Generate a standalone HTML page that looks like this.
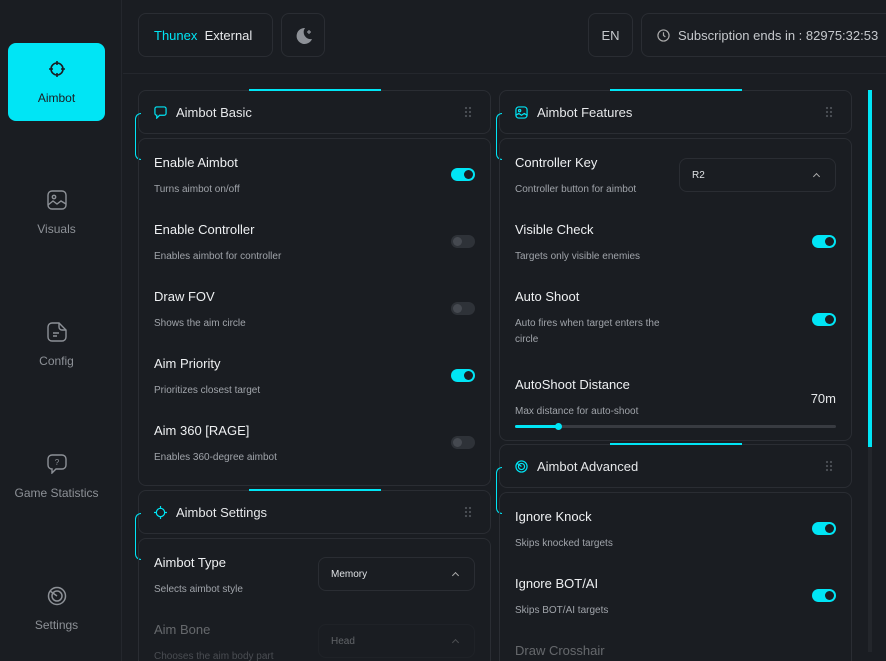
<!DOCTYPE html>
<html><head><meta charset="utf-8"><style>
*{margin:0;padding:0;box-sizing:border-box}
html{width:886px;height:661px;overflow:hidden}
body{width:886px;height:661px;background:#1a1d22;font-family:"Liberation Sans",sans-serif;color:#e6e8ea;position:relative;overflow:hidden}
.abs{position:absolute}
.side{left:0;top:0;width:122px;height:661px;border-right:1px solid #24272d}
.nav{position:absolute;left:8px;width:97px;text-align:center;font-size:12px;color:#8d9197}
.nav svg{display:block;margin:0 auto 12px}
.act{background:#00e5f5;border-radius:8px;color:#1a1d22;height:78px;top:43px;padding-top:16px}
.box{border:1px solid #2a2d33;border-radius:8px;position:absolute}
.hdr{height:44px;font-size:13px;display:flex;align-items:center;padding-left:15px}
.hdr svg{margin-right:9px}
.grip{position:absolute;right:18px;top:15px;width:8px;height:12px;background-image:radial-gradient(circle,#4a4e55 1px,transparent 1.3px);background-size:4px 4px}
.topline{position:absolute;height:2px;background:#00e5f5;width:132px}
.brk{position:absolute;width:6px;height:47px;border:1px solid #00e5f5;border-right:none;border-radius:6px 0 0 6px}
.row{position:absolute;left:15px;right:15px}
.t{font-size:13px;color:#eef0f2}
.d{font-size:10px;color:#a0a4aa;margin-top:12px;line-height:16px}
.tg{position:absolute;right:0;width:24px;height:13px;border-radius:7px;background:#00e5f5}
.tg::after{content:"";position:absolute;right:2px;top:2px;width:9px;height:9px;border-radius:50%;background:#1a1d22}
.tg.off{background:#2e3238}
.tg.off::after{background:#454950;left:2px;right:auto}
.sel{position:absolute;right:0;width:157px;height:34px;border:1px solid #2a2d33;border-radius:8px;font-size:10px;padding:11px 0 0 12px;color:#dfe2e5}
.sel::after{content:"";position:absolute;right:16px;top:15px;width:4px;height:4px;border-left:1px solid #aaa;border-top:1px solid #aaa;transform:rotate(45deg)}
</style></head><body>
<div class="abs side"></div>
<div class="nav act"><svg width="20" height="20" viewBox="0 0 20 20" fill="none" stroke="#1a1d22" stroke-width="1.6"><circle cx="10" cy="10" r="6"/><path d="M10 2v4M10 14v4M2 10h4M14 10h4"/></svg>Aimbot</div>
<div class="nav" style="top:190px"><svg width="20" height="20" viewBox="0 0 20 20" fill="none" stroke="#8d9197" stroke-width="1.4"><rect x="1" y="1" width="18" height="18" rx="4"/><circle cx="7" cy="7" r="1.7"/><path d="M1 15l5-4 4 3 4-3 5 3"/></svg>Visuals</div>
<div class="nav" style="top:322px"><svg width="20" height="20" viewBox="0 0 20 20" fill="none" stroke="#8d9197" stroke-width="1.4"><path d="M5 1h7l7 7v7a4 4 0 0 1-4 4H5a4 4 0 0 1-4-4V5a4 4 0 0 1 4-4z"/><path d="M12 1v4a3 3 0 0 0 3 3h4M6 11h6M6 14h4"/></svg>Config</div>
<div class="nav" style="top:454px"><svg width="20" height="20" viewBox="0 0 20 20" fill="none" stroke="#8d9197" stroke-width="1.4"><path d="M5 1h10a4 4 0 0 1 4 4v6a4 4 0 0 1-4 4H9l-4 4v-4a4 4 0 0 1-4-4V5a4 4 0 0 1 4-4z"/><text x="10" y="11" font-size="8" fill="#8d9197" stroke="none" text-anchor="middle" font-family="Liberation Sans">?</text></svg>Game Statistics</div>
<div class="nav" style="top:586px"><svg width="20" height="20" viewBox="0 0 20 20" fill="none" stroke="#8d9197" stroke-width="1.5"><circle cx="10" cy="10" r="8.5"/><circle cx="10" cy="10" r="5"/><path d="M3 5l7 5"/></svg>Settings</div>

<div class="abs" style="left:123px;top:73px;width:763px;height:1px;background:#24272d"></div>
<div class="box" style="left:138px;top:13px;width:135px;height:44px;font-size:13px;padding:14px 0 0 15px"><span style="color:#00e5f5">Thunex</span>&nbsp;&nbsp;External</div>
<div class="box" style="left:281px;top:13px;width:44px;height:44px"><svg class="abs" style="left:12px;top:12px" width="20" height="20" viewBox="0 0 20 20"><path d="M11 2a8 8 0 1 0 7 11A7 7 0 0 1 11 2z" fill="#8d9197"/><path d="M15 4v4M13 6h4" stroke="#8d9197" stroke-width="1.2"/></svg></div>
<div class="box" style="left:588px;top:13px;width:45px;height:44px;font-size:13px;text-align:center;padding-top:14px;color:#c5c8cc">EN</div>
<div class="box" style="left:641px;top:13px;width:260px;height:44px;font-size:13px;padding:14px 0 0 36px;color:#c5c8cc;white-space:nowrap"><svg class="abs" style="left:15px;top:15px" width="13" height="13" viewBox="0 0 14 14" fill="none" stroke="#aaa" stroke-width="1.3"><circle cx="7" cy="7" r="6"/><path d="M7 3.5V7l2 1.5"/></svg>Subscription ends in : 82975:32:53</div>

<div class="abs" style="left:868px;top:90px;width:4px;height:562px;background:#23262b"></div>
<div class="abs" style="left:868px;top:90px;width:4px;height:357px;background:#00e5f5"></div>

<div class="box hdr" style="left:138px;top:90px;width:353px">
<svg width="13" height="13" viewBox="0 0 14 14" fill="none" stroke="#00e5f5" stroke-width="1.3"><path d="M3 1h8a2 2 0 0 1 2 2v5a2 2 0 0 1-2 2H6l-3 3v-3a2 2 0 0 1-2-2V3a2 2 0 0 1 2-2z"/></svg>Aimbot Basic<div class="grip"></div></div>
<div class="topline" style="left:249px;top:89px"></div>
<div class="brk" style="left:135px;top:113px"></div>
<div class="box" style="left:138px;top:138px;width:353px;height:348px">
<div class="row" style="top:16px"><div class="t">Enable Aimbot</div><div class="d">Turns aimbot on/off</div><div class="tg" style="top:13px"></div></div>
<div class="row" style="top:83px"><div class="t">Enable Controller</div><div class="d">Enables aimbot for controller</div><div class="tg off" style="top:13px"></div></div>
<div class="row" style="top:150px"><div class="t">Draw FOV</div><div class="d">Shows the aim circle</div><div class="tg off" style="top:13px"></div></div>
<div class="row" style="top:217px"><div class="t">Aim Priority</div><div class="d">Prioritizes closest target</div><div class="tg" style="top:13px"></div></div>
<div class="row" style="top:284px"><div class="t">Aim 360 [RAGE]</div><div class="d">Enables 360-degree aimbot</div><div class="tg off" style="top:13px"></div></div>
</div>

<div class="box hdr" style="left:138px;top:490px;width:353px">
<svg width="13" height="13" viewBox="0 0 14 14" fill="none" stroke="#00e5f5" stroke-width="1.3"><circle cx="7" cy="7" r="4.5"/><path d="M7 0v3M7 11v3M0 7h3M11 7h3"/></svg>Aimbot Settings<div class="grip"></div></div>
<div class="topline" style="left:249px;top:489px"></div>
<div class="brk" style="left:135px;top:513px"></div>
<div class="box" style="left:138px;top:538px;width:353px;height:140px">
<div class="row" style="top:16px"><div class="t">Aimbot Type</div><div class="d">Selects aimbot style</div><div class="sel" style="top:2px">Memory</div></div>
<div class="row" style="top:83px;opacity:.35"><div class="t">Aim Bone</div><div class="d">Chooses the aim body part</div><div class="sel" style="top:2px">Head</div></div>
</div>

<div class="box hdr" style="left:499px;top:90px;width:353px">
<svg width="13" height="13" viewBox="0 0 14 14" fill="none" stroke="#00e5f5" stroke-width="1.3"><rect x="1" y="1" width="12" height="12" rx="3"/><circle cx="5" cy="5" r="1.2"/><path d="M1 10l3-2 3 2 3-2 3 2"/></svg>Aimbot Features<div class="grip"></div></div>
<div class="topline" style="left:610px;top:89px"></div>
<div class="brk" style="left:496px;top:113px"></div>
<div class="box" style="left:499px;top:138px;width:353px;height:303px">
<div class="row" style="top:16px"><div class="t">Controller Key</div><div class="d">Controller button for aimbot</div><div class="sel" style="top:3px">R2</div></div>
<div class="row" style="top:83px"><div class="t">Visible Check</div><div class="d">Targets only visible enemies</div><div class="tg" style="top:13px"></div></div>
<div class="row" style="top:150px"><div class="t">Auto Shoot</div><div class="d" style="width:170px">Auto fires when target enters the circle</div><div class="tg" style="top:24px"></div></div>
<div class="row" style="top:238px"><div class="t">AutoShoot Distance</div><div class="d">Max distance for auto-shoot</div><div class="abs" style="right:0;top:14px;font-size:13px">70m</div>
<div class="abs" style="left:0;right:0;top:48px;height:3px;background:#383b41;border-radius:2px"></div>
<div class="abs" style="left:0;width:42px;top:48px;height:3px;background:#00e5f5;border-radius:2px"></div>
<div class="abs" style="left:40px;top:46px;width:7px;height:7px;border-radius:50%;background:#00e5f5"></div></div>
</div>

<div class="box hdr" style="left:499px;top:444px;width:353px">
<svg width="13" height="13" viewBox="0 0 14 14" fill="none" stroke="#00e5f5" stroke-width="1.3"><circle cx="7" cy="7" r="6"/><circle cx="7" cy="7" r="3.3"/><path d="M2 3.5l5 3.5"/></svg>Aimbot Advanced<div class="grip"></div></div>
<div class="topline" style="left:610px;top:443px"></div>
<div class="brk" style="left:496px;top:467px"></div>
<div class="box" style="left:499px;top:492px;width:353px;height:180px">
<div class="row" style="top:16px"><div class="t">Ignore Knock</div><div class="d">Skips knocked targets</div><div class="tg" style="top:13px"></div></div>
<div class="row" style="top:83px"><div class="t">Ignore BOT/AI</div><div class="d">Skips BOT/AI targets</div><div class="tg" style="top:13px"></div></div>
<div class="row" style="top:150px;opacity:.35"><div class="t">Draw Crosshair</div></div>
</div>
</body></html>
